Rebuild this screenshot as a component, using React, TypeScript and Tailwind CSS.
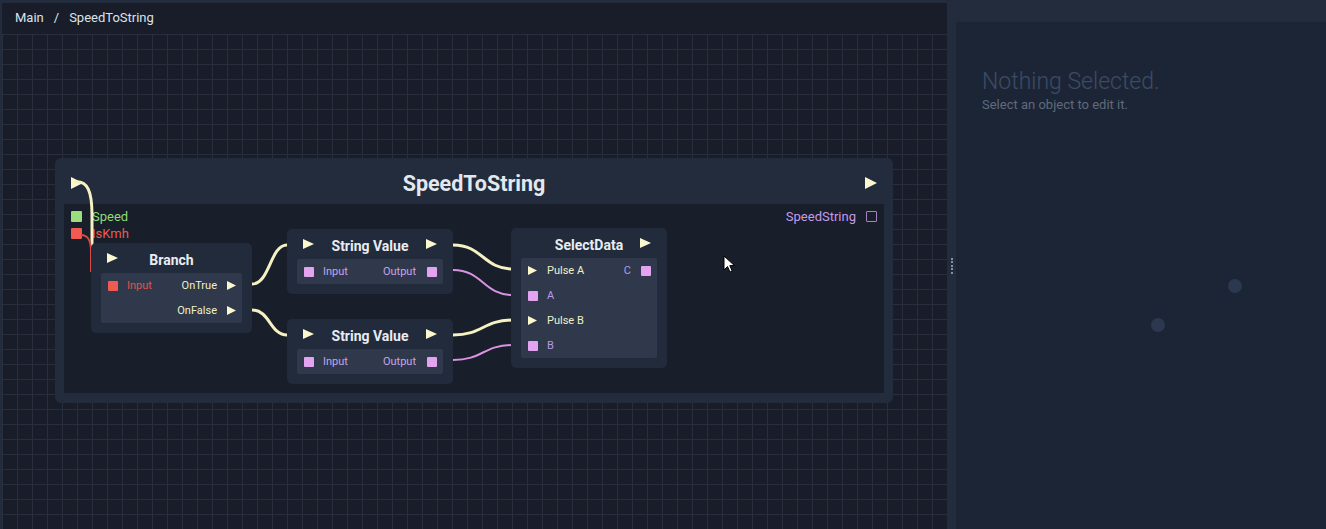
import React from 'react';

// cream pulse triangle used for exec ports
function Pulse({ w = 11, h = 10 }: { w?: number; h?: number }) {
  return (
    <svg width={w} height={h} viewBox={`0 0 ${w} ${h}`} className="block shrink-0">
      <polygon points={`0,0 ${w},${h / 2} 0,${h}`} fill="#fbf8cf" />
    </svg>
  );
}

function DataPort({ red }: { red?: boolean }) {
  return (
    <span
      className={
        red
          ? 'block h-[10px] w-[10px] shrink-0 rounded-[1px] bg-[#f05a50]'
          : 'block h-[10px] w-[10px] shrink-0 rounded-[1px] bg-[#e3a3f0]'
      }
    />
  );
}

function Row({ children }: { children: React.ReactNode }) {
  return (
    <div className="flex h-[25px] items-center justify-between pl-[7px] pr-[6px] text-[11px] leading-none">
      {children}
    </div>
  );
}

function Node({
  pos,
  title,
  inPulse,
  outPulse,
  children,
}: {
  pos: string;
  title: string;
  inPulse?: boolean;
  outPulse?: boolean;
  children: React.ReactNode;
}) {
  return (
    <div className={`absolute rounded-[5px] bg-[#222b3b] px-[10px] pb-[10px] ${pos}`}>
      <div className="grid h-[30px] grid-cols-[1fr_auto_1fr] items-start pt-[10px]">
        <div className="pl-[6px]">{inPulse && <Pulse />}</div>
        <span className="text-[14px] font-bold leading-none text-[#e8ecf3]">{title}</span>
        <div className="flex justify-end pr-[6px]">{outPulse && <Pulse />}</div>
      </div>
      <div className="rounded-[2px] bg-[#2f394b]">{children}</div>
    </div>
  );
}

function Wires() {
  const cream = '#f6f1c2';
  const lav = '#d993e4';
  return (
    <svg
      className="absolute left-0 top-0 overflow-visible"
      width={820}
      height={189}
      viewBox="64 204 820 189"
      fill="none"
    >
      <path d="M 74 182 C 88 180 92 192 92 215 L 92 272" stroke={cream} strokeWidth={3} />
      <path d="M 81 235 C 88 235 91 240 91 252 L 91 272" stroke="#d94a45" strokeWidth={2} />
      <path d="M 236 284 L 252 284 C 270 284 270 245 287 245 L 304 245" stroke={cream} strokeWidth={3} />
      <path d="M 236 310 L 252 310 C 270 310 270 335 287 335 L 304 335" stroke={cream} strokeWidth={3} />
      <path d="M 436 245 L 453 245 C 483 245 483 269 513 269 L 532 269" stroke={cream} strokeWidth={3} />
      <path d="M 436 335 L 453 335 C 483 335 483 320 513 320 L 532 320" stroke={cream} strokeWidth={3} />
      <path d="M 436 270 L 453 270 C 483 270 483 295 513 295 L 532 295" stroke={lav} strokeWidth={2} />
      <path d="M 436 360 L 453 360 C 483 360 483 345 513 345 L 532 345" stroke={lav} strokeWidth={2} />
    </svg>
  );
}

function StringValue({ pos }: { pos: string }) {
  return (
    <Node pos={pos} title="String Value" inPulse outPulse>
      <Row>
        <div className="flex items-center gap-[9px]">
          <DataPort />
          <span className="text-[#c7a3ea]">Input</span>
        </div>
        <div className="flex items-center gap-[11px]">
          <span className="text-[#c7a3ea]">Output</span>
          <DataPort />
        </div>
      </Row>
    </Node>
  );
}

export default function App() {
  return (
    <div className="flex h-[529px] w-[1326px] overflow-hidden bg-[#222c3c] font-['Roboto',sans-serif]">
      {/* left: graph editor */}
      <div className="ml-[2px] mt-[3px] flex h-[526px] w-[945px] flex-col bg-[#181d29]">
        <div className="flex h-[31px] shrink-0 items-center pb-[2px] pl-[13px] text-[13px] text-[#dde2ea]">
          <span>Main</span>
          <span className="mx-[10px]">/</span>
          <span>SpeedToString</span>
        </div>

        <div className="relative flex-1 overflow-hidden bg-[image:linear-gradient(to_right,#282e3b_1px,transparent_1px),linear-gradient(to_bottom,#282e3b_1px,transparent_1px)] bg-[size:15px_15px]">
          {/* group node */}
          <div className="absolute left-[53px] top-[124px] flex h-[245px] w-[838px] flex-col rounded-[6px] bg-[#222c3d] px-[9px] pb-[10px]">
            <div className="flex h-[46px] shrink-0 items-start justify-between pl-[7px] pr-[7px]">
              <div className="pt-[19px]">
                <Pulse w={12} h={12} />
              </div>
              <span className="pt-[15px] text-[21.5px] font-bold leading-none text-[#e3e8ef]">SpeedToString</span>
              <div className="pt-[19px]">
                <Pulse w={12} h={12} />
              </div>
            </div>

            <div className="relative flex-1 bg-[#181e2a]">
              <div className="flex justify-between pl-[7px] pr-[7px] pt-[4px] text-[13px] leading-none">
                <div className="flex flex-col">
                  <div className="flex h-[17px] items-center gap-[10px]">
                    <span className="block h-[11px] w-[11px] rounded-[1px] bg-[#9ade7e]" />
                    <span className="text-[#8fdb79]">Speed</span>
                  </div>
                  <div className="flex h-[17px] items-center gap-[10px]">
                    <span className="block h-[11px] w-[11px] rounded-[1px] bg-[#f05a50]" />
                    <span className="text-[#ec5b4f]">IsKmh</span>
                  </div>
                </div>
                <div className="flex h-[17px] items-center gap-[10px]">
                  <span className="text-[#c69be6]">SpeedString</span>
                  <span className="block h-[11px] w-[11px] rounded-[1px] border-[1.5px] border-[#a582c2]" />
                </div>
              </div>

              <Wires />

              <Node pos="left-[27px] top-[39px] w-[161px]" title="Branch" inPulse>
                <Row>
                  <div className="flex items-center gap-[9px]">
                    <DataPort red />
                    <span className="text-[#e0544c]">Input</span>
                  </div>
                  <div className="flex items-center gap-[10px]">
                    <span className="text-[#f2efc8]">OnTrue</span>
                    <Pulse w={9} h={9} />
                  </div>
                </Row>
                <Row>
                  <span />
                  <div className="flex items-center gap-[10px]">
                    <span className="text-[#f2efc8]">OnFalse</span>
                    <Pulse w={9} h={9} />
                  </div>
                </Row>
              </Node>

              <StringValue pos="left-[223px] top-[25px] w-[166px]" />
              <StringValue pos="left-[223px] top-[115px] w-[166px]" />

              <Node pos="left-[447px] top-[24px] w-[156px]" title="SelectData" outPulse>
                <Row>
                  <div className="flex items-center gap-[10px]">
                    <Pulse w={9} h={9} />
                    <span className="text-[#f1efc9]">Pulse A</span>
                  </div>
                  <div className="flex items-center gap-[10px]">
                    <span className="text-[#b79be6]">C</span>
                    <DataPort />
                  </div>
                </Row>
                <Row>
                  <div className="flex items-center gap-[9px]">
                    <DataPort />
                    <span className="text-[#b79be6]">A</span>
                  </div>
                </Row>
                <Row>
                  <div className="flex items-center gap-[10px]">
                    <Pulse w={9} h={9} />
                    <span className="text-[#f1efc9]">Pulse B</span>
                  </div>
                </Row>
                <Row>
                  <div className="flex items-center gap-[9px]">
                    <DataPort />
                    <span className="text-[#b79be6]">B</span>
                  </div>
                </Row>
              </Node>
            </div>
          </div>

          {/* mouse pointer */}
          <svg className="absolute left-[721px] top-[221px]" width={13} height={19} viewBox="0 0 13 19">
            <path
              d="M1 1 L1 15 L4.5 11.5 L7 17 L9.2 16 L6.8 10.6 L11.5 10.6 Z"
              fill="#ffffff"
              stroke="#000000"
              strokeWidth={1}
              strokeLinejoin="round"
            />
          </svg>
        </div>
      </div>

      {/* splitter */}
      <div className="flex w-[9px] shrink-0 flex-col items-center justify-center gap-[1.5px] pt-[2px]">
        <span className="block h-[2px] w-[2px] bg-[#8592a4]" />
        <span className="block h-[2px] w-[2px] bg-[#8592a4]" />
        <span className="block h-[2px] w-[2px] bg-[#8592a4]" />
        <span className="block h-[2px] w-[2px] bg-[#8592a4]" />
        <span className="block h-[2px] w-[2px] bg-[#8592a4]" />
      </div>

      {/* right: inspector */}
      <div className="flex flex-1 flex-col pt-[22px]">
        <div className="relative flex-1 bg-[#1c2536] pl-[26px] pt-[48px]">
          <div className="text-[23px] font-light leading-none text-[#3e4b65]">Nothing Selected.</div>
          <div className="mt-[5px] text-[13px] leading-none text-[#606a7b]">Select an object to edit it.</div>

          <span className="absolute left-[272px] top-[257px] block h-[14px] w-[14px] rounded-full bg-[#2b384f]" />
          <span className="absolute left-[195px] top-[296px] block h-[14px] w-[14px] rounded-full bg-[#2b384f]" />
        </div>
      </div>
    </div>
  );
}
